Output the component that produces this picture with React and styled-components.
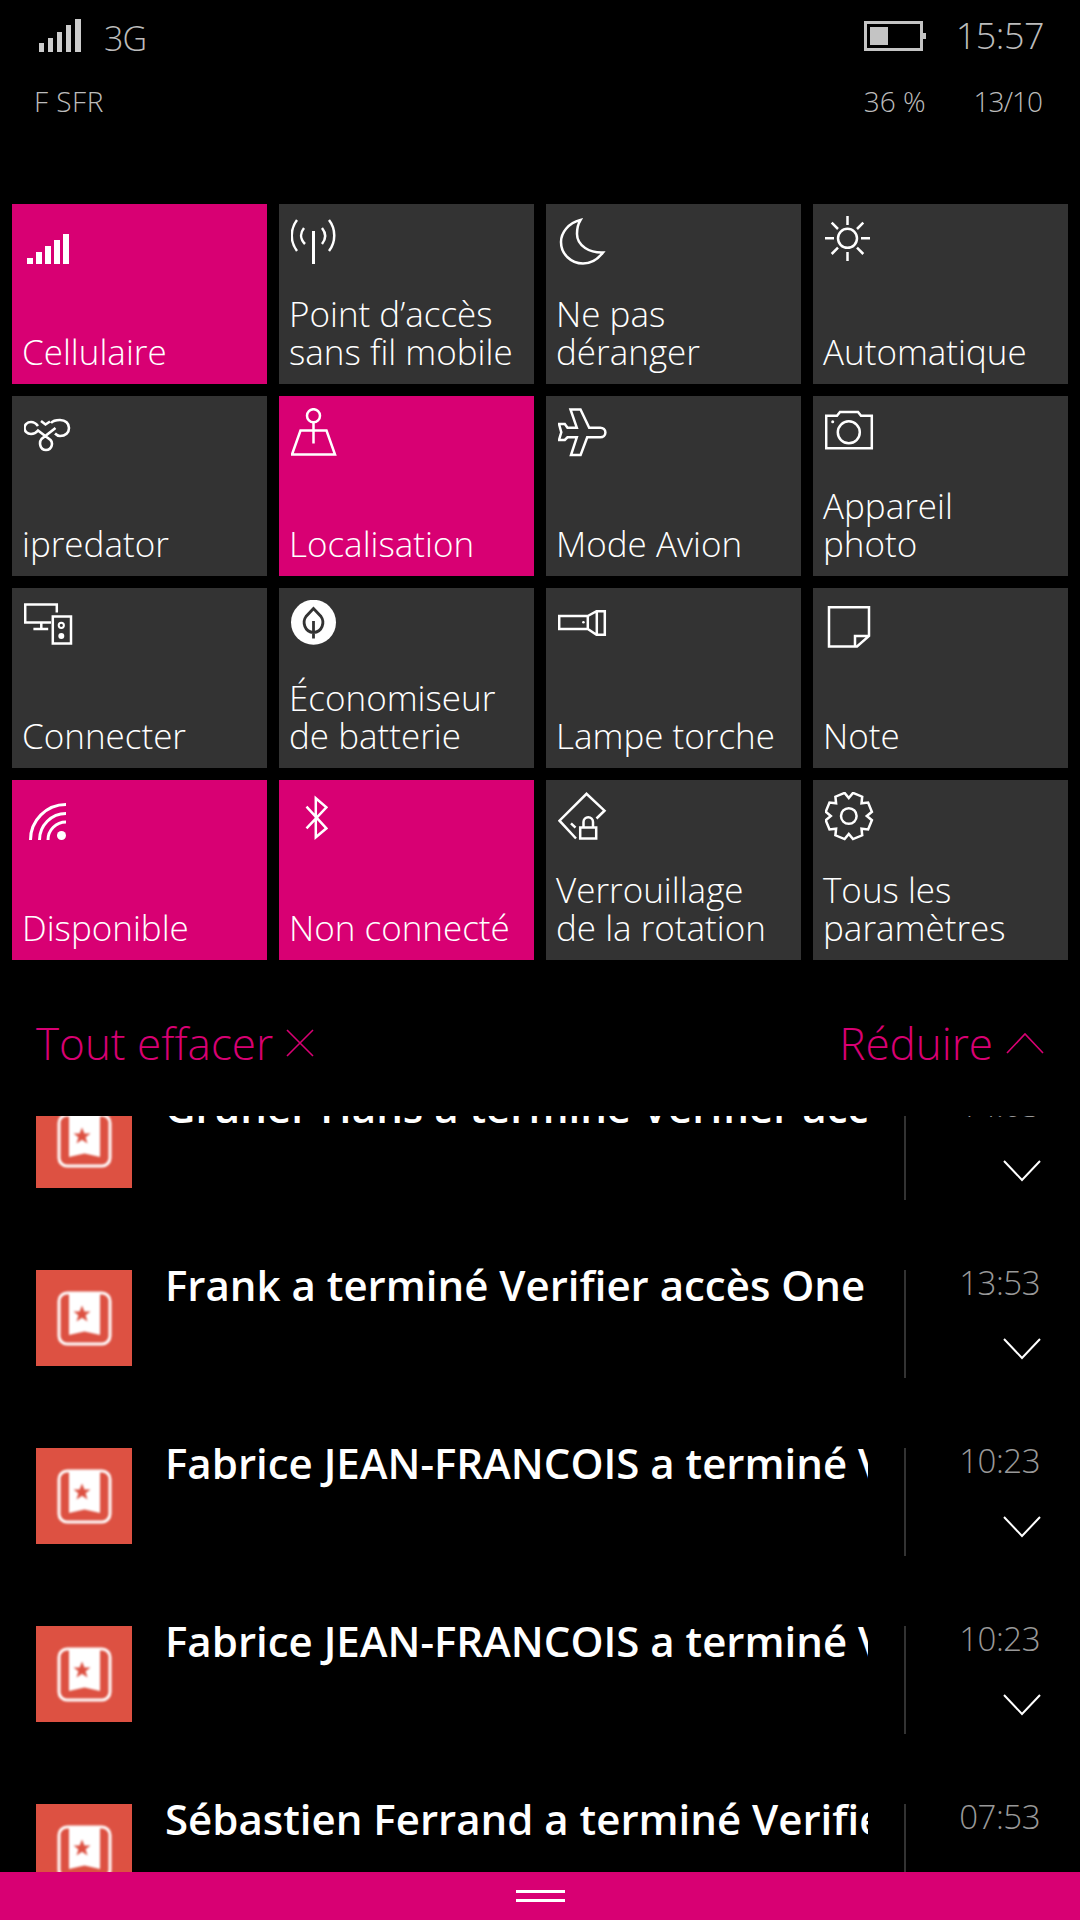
import React from "react";
import styled, { createGlobalStyle } from "styled-components";

const Global = createGlobalStyle`
  html, body { margin: 0; padding: 0; background: #000; }
  #root { width: 1080px; height: 1920px; }
`;
const ACCENT = "#d80073";
const Screen = styled.div`
  width: 1080px; height: 1920px; background: #000; overflow: hidden;
  display: flex; flex-direction: column;
  font-family: "Open Sans", "Noto Sans", sans-serif; font-weight: 300;
`;
const StatusBar = styled.header`
  height: 204px; box-sizing: border-box; padding: 19px 36px 0 34px; flex: none;
  display: flex; justify-content: space-between; color: #bcbcbc;
`;
const StatusColumn = styled.div`
  display: flex; flex-direction: column;
`;
const StatusLine = styled.div`
  height: 33px; display: flex; align-items: center; gap: 29px;
`;
const SignalLine = styled(StatusLine)`padding-left: 5px; gap: 23px;`;
const StatusSmall = styled.div`
  margin-top: 36px; font-size: 28px; line-height: 27px; display: flex; gap: 48px;
`;
const CarrierText = styled.span`letter-spacing: 0.5px;`;
const DateText = styled.span`letter-spacing: -1px;`;
const NetworkType = styled.span`font-size: 34px; line-height: 33px; letter-spacing: -1px; position: relative; top: 3px;`;
const ClockText = styled.span`font-size: 36px; line-height: 33px; letter-spacing: -0.5px;`;
const TileGrid = styled.section`
  flex: none; display: grid; grid-template-columns: repeat(4, 255px); grid-auto-rows: 180px;
  gap: 12px; padding: 0 12px;
`;
const TileBox = styled.div`
  background: ${p => (p.$on ? ACCENT : "#333333")}; color: #fff; box-sizing: border-box;
  padding: 12px 4px 14px 10px; display: flex; flex-direction: column; justify-content: space-between;
`;
const TileIcon = styled.svg`
  display: block; width: 60px; height: 60px; margin-left: 2px; fill: none; stroke: #fff; stroke-width: 2.5;
`;
const TileLabel = styled.div`
  font-size: 35px; line-height: 37.5px; white-space: pre-line;
`;
const ActionRow = styled.div`
  flex: none; height: 156px; box-sizing: border-box; padding: 53px 36px 0 36px;
  display: flex; justify-content: space-between; color: ${ACCENT};
  font-size: 44px; line-height: 60px;
`;
const ActionItem = styled.div`display: flex; align-items: center; height: 60px; gap: 13px;`;
const ActionIcon = styled.svg`
  display: block; fill: none; stroke: ${ACCENT}; stroke-width: 1.6;
`;
const NoteList = styled.section`
  flex: none; height: 756px; overflow: hidden;
`;
const NoteStack = styled.div`
  margin-top: -24px; display: flex; flex-direction: column; gap: 70px;
`;
const NoteRow = styled.article`
  height: 108px; display: flex; padding-left: 36px;
`;
const AppTile = styled.div`
  flex: none; width: 96px; height: 96px; background: #dd5142;
`;
const BookIcon = styled.svg`
  display: block; width: 96px; height: 96px; filter: blur(0.8px);
`;
const NoteTitle = styled.div`
  flex: none; width: 703px; margin-left: 33px; overflow: hidden; white-space: nowrap;
  color: #fff; font-weight: 600; font-size: 42px; line-height: 44px; margin-top: -7px; height: 60px;
`;
const NoteSide = styled.div`
  flex: none; margin-left: 36px; width: 136px; box-sizing: border-box; height: 108px;
  border-left: 2px solid #333;
  display: flex; flex-direction: column; align-items: flex-end;
`;
const NoteTime = styled.div`
  font-size: 33px; line-height: 26px; color: #999; letter-spacing: -0.5px;
`;
const Chevron = styled.svg`
  display: block; width: 38px; height: 22px; margin: 42px -1px 0 0; fill: none; stroke: #fff; stroke-width: 2;
`;
const HandleBar = styled.footer`
  flex: none; height: 48px; background: ${ACCENT}; display: flex; flex-direction: column;
  align-items: center; padding-top: 18px; box-sizing: border-box; gap: 6px;
`;
const HandleLine = styled.span`
  display: block; width: 49px; height: 3px; background: #fff;
`;

const gearPath = (() => {
  const cx = 35.8, cy = 36, teeth = 8, R = 23.5, r = 18;
  const pts = [];
  for (let i = 0; i < teeth; i++) {
    const a = (i / teeth) * Math.PI * 2 - Math.PI / 2 + Math.PI / 8;
    const d = Math.PI / 4;
    [[-0.5, r], [-0.27, R], [0.27, R], [0.5, r]].forEach(([o, rad]) => {
      const t = a + o * d;
      pts.push(`${(cx + rad * Math.cos(t)).toFixed(1)} ${(cy + rad * Math.sin(t)).toFixed(1)}`);
    });
  }
  return "M" + pts.join("L") + "Z";
})();

const icons = {
  signal: (
    <g fill="#fff" stroke="none">
      <rect x="15" y="54" width="6" height="6" /><rect x="24" y="48" width="6" height="12" />
      <rect x="33" y="42" width="6" height="18" /><rect x="42" y="36" width="6" height="24" />
      <rect x="51" y="30" width="6" height="30" />
    </g>
  ),
  antenna: (
    <>
      <path d="M34.5 27V60" strokeWidth="3" />
      <path d="M18 16C11 25 11 38 18 47M25 24C21 29 21 35 26 40M50 16C57 25 57 38 50 47M43 24C47 29 47 35 43 40" />
    </>
  ),
  moon: <path d="M34.5 16C22 19 15 29 15 38C15 50 25 59.5 37 59.5C45 59.5 52 55 57 48.5C44 49 31 42 31 30C31 25 32 20 34.5 16Z" />,
  sun: (
    <>
      <circle cx="34.5" cy="34.3" r="9.5" />
      <path d="M34.5 12V21M34.5 48V57M12 34.3H21M48 34.3H57M18.7 18.7L25 25M50.3 18.7L44 25M18.7 50L25 43.7M50.3 50L44 43.7" />
    </>
  ),
  knot: (
    <path
      d="M29 25L33.5 28.5L38 25.5M39 27C41 24.5 44.5 24 48 24C53.5 24 57 27.5 57 32C57 36.5 53.5 40 48 40C46 40 44.5 39 43 37.5M43.5 32L29.5 43C27 46 27.5 54 34 54C40.5 54 41 46.5 38.5 44L26 34.5C24 37 21.5 38 19 38C15 38 12.5 35 12.5 32C12.5 29 15 26 19 26C22 26 24.5 28 26 30"
      strokeWidth="2.6"
    />
  ),
  pin: (
    <>
      <circle cx="34.5" cy="19.7" r="6.5" />
      <path d="M34.5 27V47.5M21.5 34.5H47.5L56 58.5H13Z" />
    </>
  ),
  plane: <path d="M24.5 13.5H34.5L43.2 31.7H54.3C57 31.7 59.4 33.5 59.4 36.5C59.4 39.5 57 41.3 54.3 41.3H41.2L34.6 59H25L30.8 41.3H21.5L18.8 44H13L15.3 36.3L13 28H18.8L21.5 31.7H30.8Z" />,
  camera: (
    <>
      <path d="M13.2 19.8H24L27 16H45L48 19.8H58.8V52.2H13.2Z" />
      <circle cx="35.8" cy="36.3" r="11" />
      <circle cx="19.7" cy="25.7" r="1.5" fill="#fff" stroke="none" />
    </>
  ),
  cast: (
    <>
      <path d="M44.8 24.5V16.5H13.2V34.5H39M29.3 35V41M21.4 41H36.2" />
      <rect x="40.8" y="28.5" width="18.2" height="27" />
      <circle cx="49.3" cy="37.3" r="2.6" strokeWidth="2" />
      <circle cx="49.3" cy="48" r="3" fill="#fff" stroke="none" />
    </>
  ),
  leaf: (
    <>
      <circle cx="34.5" cy="34.3" r="22.5" fill="#fff" stroke="none" />
      <path d="M34.5 20.5L27 28.5C23 34 25.5 44 34.5 44.5C43.5 44 46 34 42 28.5ZM34.5 33V50.5" stroke="#333" strokeWidth="2.8" />
    </>
  ),
  torch: (
    <>
      <path d="M41.8 28H13.2V41H41.8ZM41.8 28L50.5 23.2H58.8V46.8H50.5L41.8 41M50.8 23.2V46.8" />
      <circle cx="37.4" cy="34.3" r="1.3" fill="#fff" stroke="none" />
    </>
  ),
  note: <path d="M16 19.3H56V48L44 58.5H16ZM56 48H42V58.5" />,
  wifi: (
    <>
      <circle cx="49.5" cy="55.5" r="4.5" fill="#fff" stroke="none" />
      <path d="M18.5 60A35.5 35.5 0 0 1 54 24.5M27.5 60A26.5 26.5 0 0 1 54 33.5M36 60A18 18 0 0 1 54 42" strokeWidth="3" />
    </>
  ),
  bluetooth: <path d="M27.5 26.7L47.4 48.3L36.8 57.3V18.3L47.4 27.3L27.5 48.3" />,
  rotation: (
    <>
      <path d="M30 58.5L13.5 40.7L40.5 13.8L58.5 30.7L50.5 38.5M25 43.3L29.5 47.7" />
      <rect x="34.2" y="47.5" width="16" height="11" />
      <path d="M37.5 47V42A4.7 4.7 0 0 1 47 42V47" />
    </>
  ),
  gear: (
    <>
      <path d={gearPath} />
      <circle cx="35.8" cy="36" r="7.8" />
    </>
  ),
};

const tiles = [
  ["signal", "Cellulaire", true], ["antenna", "Point d’accès\nsans fil mobile"],
  ["moon", "Ne pas\ndéranger"], ["sun", "Automatique"],
  ["knot", "ipredator"], ["pin", "Localisation", true],
  ["plane", "Mode Avion"], ["camera", "Appareil\nphoto"],
  ["cast", "Connecter"], ["leaf", "Économiseur\nde batterie"],
  ["torch", "Lampe torche"], ["note", "Note"],
  ["wifi", "Disponible", true], ["bluetooth", "Non connecté", true],
  ["rotation", "Verrouillage\nde la rotation"], ["gear", "Tous les\nparamètres"],
];

const notes = [
  ["Gruner Hans a terminé Verifier accès One", "14:03"],
  ["Frank a terminé Verifier accès One", "13:53"],
  ["Fabrice JEAN-FRANCOIS a terminé Verifier", "10:23"],
  ["Fabrice JEAN-FRANCOIS a terminé Verifier", "10:23"],
  ["Sébastien Ferrand a terminé Verifier accès", "07:53"],
];

const Book = () => (
  <BookIcon viewBox="0 0 96 96">
    <rect x="23" y="23" width="51" height="51" rx="8" fill="none" stroke="#fff" strokeWidth="3" />
    <path d="M33 22H64V65L48.5 61.5L33 65Z" fill="#fff" />
    <path d="M46 35.5L48.4 41.5H54.5L49.6 45.2L51.5 51.5L46 47.7L40.5 51.5L42.4 45.2L37.5 41.5H43.6Z" fill="#dd5142" />
  </BookIcon>
);

export default function App() {
  return (
    <Screen>
      <Global />
      <StatusBar>
        <StatusColumn>
          <SignalLine>
            <svg width="42" height="33" viewBox="0 0 42 33" fill="#ccc">
              <rect x="0" y="24" width="5" height="9" /><rect x="9" y="19" width="5" height="14" />
              <rect x="18" y="13" width="5" height="20" /><rect x="27" y="6" width="5" height="27" />
              <rect x="36" y="0" width="6" height="33" />
            </svg>
            <NetworkType>3G</NetworkType>
          </SignalLine>
          <StatusSmall><CarrierText>F SFR</CarrierText></StatusSmall>
        </StatusColumn>
        <StatusColumn>
          <StatusLine>
            <svg width="63" height="30" viewBox="0 0 63 30" fill="none">
              <rect x="1.5" y="1.5" width="56" height="27" stroke="#c4c4c4" strokeWidth="3" />
              <rect x="6" y="6" width="18" height="18" fill="#c4c4c4" />
              <rect x="59" y="12" width="3" height="6" fill="#c4c4c4" />
            </svg>
            <ClockText>15:57</ClockText>
          </StatusLine>
          <StatusSmall>
            <span>36 %</span>
            <DateText>13/10</DateText>
          </StatusSmall>
        </StatusColumn>
      </StatusBar>
      <TileGrid>
        {tiles.map(([icon, label, on]) => (
          <TileBox key={label} $on={on}>
            <TileIcon viewBox="12 12 60 60">{icons[icon]}</TileIcon>
            <TileLabel>{label}</TileLabel>
          </TileBox>
        ))}
      </TileGrid>
      <ActionRow>
        <ActionItem>
          Tout effacer
          <ActionIcon width="28" height="28" viewBox="0 0 28 28"><path d="M1 1L27 27M27 1L1 27" /></ActionIcon>
        </ActionItem>
        <ActionItem>
          Réduire
          <ActionIcon width="38" height="22" viewBox="0 0 38 22"><path d="M1 21L19 2L37 21" /></ActionIcon>
        </ActionItem>
      </ActionRow>
      <NoteList>
        <NoteStack>
          {notes.map(([title, time], i) => (
            <NoteRow key={i}>
              <AppTile><Book /></AppTile>
              <NoteTitle>{title}</NoteTitle>
              <NoteSide>
                <NoteTime>{time}</NoteTime>
                <Chevron viewBox="0 0 38 22"><path d="M1 1L19 20L37 1" /></Chevron>
              </NoteSide>
            </NoteRow>
          ))}
        </NoteStack>
      </NoteList>
      <HandleBar><HandleLine /><HandleLine /></HandleBar>
    </Screen>
  );
}
